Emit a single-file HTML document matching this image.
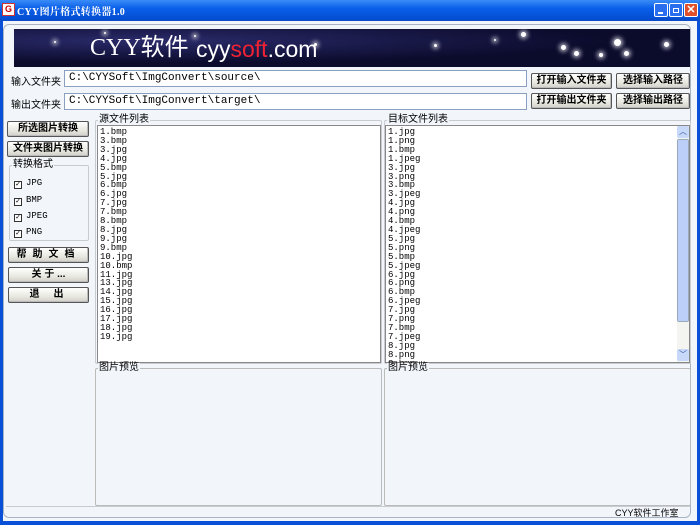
<!DOCTYPE html>
<html><head><meta charset="utf-8"><style>
*{margin:0;padding:0;box-sizing:border-box}
body{width:700px;height:525px;overflow:hidden;background:#0a4fd8;font-family:"Liberation Sans","Noto Sans CJK SC",sans-serif;font-size:10px;color:#000;position:relative}
.a{position:absolute}
#title{left:0;top:0;width:700px;height:21px;background:linear-gradient(#3a8cf8,#0a5fe8 40%,#0552d8 80%,#0a4ac8)}
#title .t{left:17px;top:3px;color:#fff;font-weight:bold;font-size:10px;font-family:"Liberation Serif","Noto Serif CJK SC",serif;letter-spacing:.3px}
.ic{top:3px;width:14px;height:14px;border:1px solid #fff;border-radius:2px}
#body{left:0;top:21px;width:700px;height:500px;background:#f2f6fb;border-left:3px solid #0a4fd8;border-right:3px solid #0a4fd8}
#panel{left:3px;top:3px;width:688px;height:494px;border:1px solid #a8b4c4;border-radius:6px}
#banner{left:14px;top:29px;width:676px;height:38px;background:radial-gradient(ellipse at 20% 30%,#2a2a6a,#0b0b2c 60%),#0b0b2c;overflow:hidden}
.st{position:absolute;background:#fff;border-radius:50%;box-shadow:0 0 4px 2px #aab}
.lbl{font-size:10px}
.tb{height:17px;background:#fff;border:1px solid #8aa0c0;font-family:"Liberation Mono",monospace;font-size:11px;padding:1px 4px}
.btn{height:16px;background:linear-gradient(#fff,#e8e8e0 60%,#d0d0c8);border:1px solid #555;border-radius:2px;text-align:center;font-weight:bold;font-size:10px;line-height:14px;box-shadow:inset -1px -1px #bbb}
.gb{border:1px solid #c8ccd0;border-radius:2px}
.gt{background:#f2f6fb;padding:0 1px;font-size:10px;line-height:10px}
.list{background:#fff;border:1px solid #888;font-family:"Liberation Mono","DejaVu Sans Mono",monospace;font-size:9px;line-height:8.9px;padding:1px 2px;overflow:hidden;white-space:pre}
.cb{font-family:"Liberation Mono",monospace;font-size:9px}
.cb i{display:inline-block;width:8px;height:8px;border:1px solid #333;background:#fff;vertical-align:-1px;margin-right:4px;font-style:normal;font-size:8px;line-height:6px;text-align:center}
</style></head><body>
<div id="title" class="a">
 <div class="a" style="left:2px;top:3px;width:13px;height:13px;background:#fff;border:1px solid #c33;color:#c00;font-size:9px;font-weight:bold;line-height:11px;text-align:center">G</div>
 <div class="a t">CYY图片格式转换器1.0</div>
 <div class="a ic" style="left:654px;background:#2a6ef0"><div class="a" style="left:3px;top:8px;width:5px;height:2px;background:#fff"></div></div>
 <div class="a ic" style="left:669px;background:#2a6ef0"><div class="a" style="left:3px;top:4px;width:6px;height:5px;border:1px solid #fff"></div></div>
 <div class="a ic" style="left:684px;background:#e0502a;color:#fff;font-size:11px;line-height:12px;text-align:center;font-weight:bold">✕</div>
</div>
<div id="body" class="a"></div>
<div id="panel" class="a" style="left:3px;top:24px"></div>
<div id="banner" class="a">
 <div class="st" style="left:180px;top:6px;width:2px;height:2px"></div>
 <div class="st" style="left:300px;top:14px;width:3px;height:3px"></div>
 <div class="st" style="left:420px;top:15px;width:3px;height:3px"></div>
 <div class="st" style="left:507px;top:3px;width:5px;height:5px"></div>
 <div class="st" style="left:547px;top:16px;width:5px;height:5px"></div>
 <div class="st" style="left:560px;top:22px;width:5px;height:5px"></div>
 <div class="st" style="left:585px;top:24px;width:4px;height:4px"></div>
 <div class="st" style="left:600px;top:10px;width:7px;height:7px"></div>
 <div class="st" style="left:610px;top:22px;width:5px;height:5px"></div>
 <div class="st" style="left:650px;top:13px;width:5px;height:5px"></div>
 <div class="st" style="left:40px;top:12px;width:2px;height:2px"></div>
 <div class="st" style="left:90px;top:3px;width:2px;height:2px"></div>
 <div class="st" style="left:480px;top:10px;width:2px;height:2px"></div>
 <div class="a" style="left:76px;top:5px;color:#fff;font-size:24px;font-family:'Liberation Serif','Noto Sans CJK SC',serif;line-height:28px">CYY软件</div>
 <div class="a" style="left:182px;top:7px;color:#fff;font-size:23px;line-height:26px">cyy<span style="color:#e23">soft</span>.com</div>
</div>
<div class="a lbl" style="left:11px;top:73px">输入文件夹</div>
<div class="a tb" style="left:64px;top:70px;width:463px">C:\CYYSoft\ImgConvert\source\</div>
<div class="a btn" style="left:531px;top:73px;width:81px">打开输入文件夹</div>
<div class="a btn" style="left:616px;top:73px;width:74px">选择输入路径</div>
<div class="a lbl" style="left:11px;top:96px">输出文件夹</div>
<div class="a tb" style="left:64px;top:93px;width:463px">C:\CYYSoft\ImgConvert\target\</div>
<div class="a btn" style="left:531px;top:93px;width:81px">打开输出文件夹</div>
<div class="a btn" style="left:616px;top:93px;width:74px">选择输出路径</div>

<div class="a btn" style="left:7px;top:121px;width:82px">所选图片转换</div>
<div class="a btn" style="left:7px;top:141px;width:82px">文件夹图片转换</div>
<div class="a gb" style="left:9px;top:165px;width:80px;height:76px"></div>
<div class="a gt" style="left:12px;top:160px">转换格式</div>
<div class="a cb" style="left:14px;top:178px"><i>✓</i>JPG</div>
<div class="a cb" style="left:14px;top:195px"><i>✓</i>BMP</div>
<div class="a cb" style="left:14px;top:211px"><i>✓</i>JPEG</div>
<div class="a cb" style="left:14px;top:227px"><i>✓</i>PNG</div>
<div class="a btn" style="left:8px;top:247px;width:81px;letter-spacing:6px">帮助文档</div>
<div class="a btn" style="left:8px;top:267px;width:81px">关 于 ...</div>
<div class="a btn" style="left:8px;top:287px;width:81px;letter-spacing:14px;padding-left:10px">退出</div>

<div class="a gb" style="left:95px;top:120px;width:287px;height:244px"></div>
<div class="a gt" style="left:98px;top:115px">源文件列表</div>
<div class="a list" style="left:97px;top:125px;width:284px;height:238px;padding-top:2px">1.bmp
3.bmp
3.jpg
4.jpg
5.bmp
5.jpg
6.bmp
6.jpg
7.jpg
7.bmp
8.bmp
8.jpg
9.jpg
9.bmp
10.jpg
10.bmp
11.jpg
13.jpg
14.jpg
15.jpg
16.jpg
17.jpg
18.jpg
19.jpg</div>
<div class="a gb" style="left:384px;top:120px;width:307px;height:244px"></div>
<div class="a gt" style="left:387px;top:115px">目标文件列表</div>
<div class="a list" style="left:385px;top:125px;width:305px;height:238px;padding-top:2px">1.jpg
1.png
1.bmp
1.jpeg
3.jpg
3.png
3.bmp
3.jpeg
4.jpg
4.png
4.bmp
4.jpeg
5.jpg
5.png
5.bmp
5.jpeg
6.jpg
6.png
6.bmp
6.jpeg
7.jpg
7.png
7.bmp
7.jpeg
8.jpg
8.png
8.bmp</div>
<div class="a" style="left:677px;top:126px;width:12px;height:236px;background:#f4f4f0">
 <div class="a" style="left:0;top:0;width:12px;height:12px;background:#c8d8f8;border-radius:2px;color:#35a;font-size:8px;text-align:center;line-height:12px">︿</div>
 <div class="a" style="left:0;top:13px;width:12px;height:183px;background:#bccff8;border:1px solid #9ab;border-radius:2px"></div>
 <div class="a" style="left:0;top:223px;width:12px;height:12px;background:#c8d8f8;border-radius:2px;color:#35a;font-size:8px;text-align:center;line-height:12px">﹀</div>
</div>

<div class="a gb" style="left:95px;top:368px;width:287px;height:138px;border-color:#bbb"></div>
<div class="a gt" style="left:98px;top:363px">图片预览</div>
<div class="a gb" style="left:384px;top:368px;width:307px;height:138px;border-color:#bbb"></div>
<div class="a gt" style="left:387px;top:363px">图片预览</div>
<div class="a" style="left:6px;top:506px;width:684px;height:1px;background:#c8ccd0"></div>
<div class="a" style="left:615px;top:506px;font-size:9px">CYY软件工作室</div>
</body></html>
